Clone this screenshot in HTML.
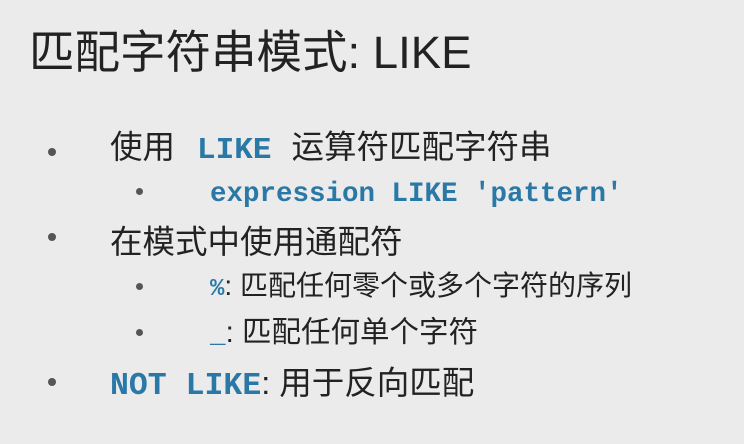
<!DOCTYPE html>
<html><head><meta charset="utf-8"><style>
body{margin:0;width:744px;height:444px;background:#ebebeb;overflow:hidden;position:relative;font-family:"Liberation Sans","Noto Sans CJK SC",sans-serif;color:#222}
.l{position:absolute;white-space:nowrap;line-height:1}
.c{font-family:"Liberation Mono",monospace;font-weight:bold;color:#2a78a6}
.d{position:absolute;width:8px;height:8px;border-radius:50%;background:#555}
.s{width:7px;height:7px}
</style></head><body>
<div class="l" style="left:29px;top:30px;font-size:45.5px">匹配字符串模式: LIKE</div>

<div class="d" style="left:48px;top:148px"></div>
<div class="l" style="left:110px;top:131px;font-size:32.5px">使用<span class="c" style="font-size:31px;margin:0 20px 0 22px">LIKE</span>运算符匹配字符串</div>

<div class="d s" style="left:136px;top:188px"></div>
<div class="l c" style="left:210px;top:181px;font-size:27.5px">expression LIKE 'pattern'</div>

<div class="d" style="left:48px;top:233px"></div>
<div class="l" style="left:110px;top:226px;font-size:32.5px">在模式中使用通配符</div>

<div class="d s" style="left:136px;top:283px"></div>
<div class="l" style="left:210px;top:272px;font-size:28px"><span class="c" style="font-size:24px">%</span>: 匹配任何零个或多个字符的序列</div>

<div class="d s" style="left:136px;top:329px"></div>
<div class="l" style="left:210px;top:318px;font-size:29.5px"><span class="c" style="font-size:26px">_</span>: 匹配任何单个字符</div>

<div class="d" style="left:48px;top:378px"></div>
<div class="l" style="left:110px;top:367px;font-size:32.5px"><span class="c" style="font-size:31.5px">NOT LIKE</span>: 用于反向匹配</div>
</body></html>
